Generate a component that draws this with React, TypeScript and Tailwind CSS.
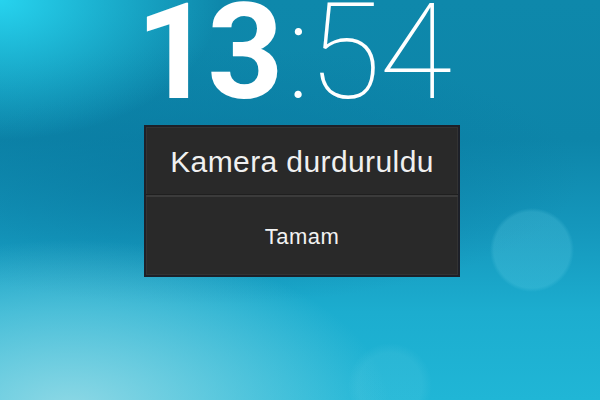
export default function App() {
  return (
    <div
      className="relative w-[600px] h-[400px] overflow-hidden flex flex-col items-center bg-[radial-gradient(circle_at_532px_250px,rgba(110,215,235,0.22)_0px,rgba(110,215,235,0.22)_38px,rgba(110,215,235,0)_42px),radial-gradient(circle_at_390px_385px,rgba(130,220,235,0.12)_0px,rgba(130,220,235,0.12)_32px,rgba(130,220,235,0)_42px),radial-gradient(ellipse_320px_170px_at_70px_410px,rgba(148,218,230,0.95),rgba(148,218,230,0)),radial-gradient(ellipse_220px_140px_at_0px_0px,rgba(40,215,242,0.95),rgba(40,215,242,0)),radial-gradient(ellipse_380px_130px_at_200px_175px,rgba(8,120,160,0.75),rgba(8,120,160,0)),linear-gradient(180deg,#0e88ab_0%,#0d85a9_35%,#1598bd_58%,#1cadcf_78%,#20b6d6_100%)]"
    >
      <div
        className="mt-[-14px] ml-[-14px] flex items-baseline text-white leading-[134px] text-[133px]"
        style={{ fontFamily: 'Roboto, "Liberation Sans", sans-serif' }}
      >
        <span className="font-bold tracking-[-5px]">13</span>
        <span className="font-thin tracking-[-2px] ml-[8px]">:54</span>
      </div>
      <div
        className="mt-[5px] ml-[4px] w-[316px] h-[152px] border-2 border-[#1d2028] bg-[#292929] shadow-[inset_0_0_0_1px_#333333] flex flex-col"
        style={{ fontFamily: '"Liberation Sans", Arial, sans-serif' }}
      >
        <div className="h-[67px] flex items-center justify-center text-[30px] text-[#f0f0f0] tracking-[0.4px] pt-[2px]">
          Kamera durduruldu
        </div>
        <div className="h-[1px] bg-[#1f1f1f]" />
        <div className="h-[2px] bg-[#3b3b3b]" />
        <div className="flex-1 flex items-center justify-center text-[22px] text-[#f2f2f2] tracking-[0.5px]">
          Tamam
        </div>
      </div>
    </div>
  );
}
